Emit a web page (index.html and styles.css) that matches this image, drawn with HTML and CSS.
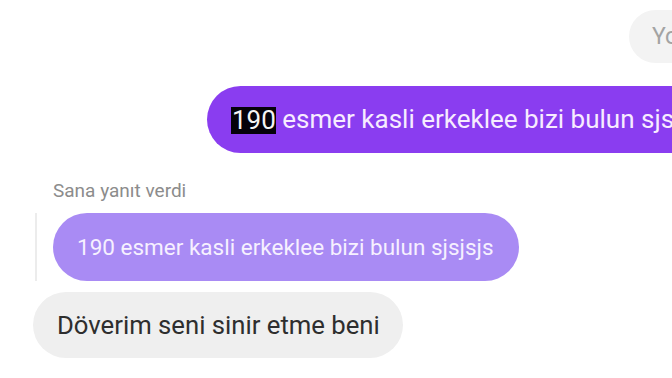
FILE: index.html
```html
<!DOCTYPE html>
<html>
<head>
<meta charset="utf-8">
<link rel="stylesheet" href="styles.css">
</head>
<body>
<div class="chat">
  <div class="row row-top">
    <div class="bubble bubble-faint">You replied</div>
  </div>
  <div class="row row-sent">
    <div class="bubble bubble-sent"><span class="hl">190</span> esmer kasli erkeklee bizi bulun sjsjsjs</div>
  </div>
  <div class="reply-label">Sana yanıt verdi</div>
  <div class="row row-quote">
    <div class="quote-line"></div>
    <div class="bubble bubble-quote">190 esmer kasli erkeklee bizi bulun sjsjsjs</div>
  </div>
  <div class="row row-recv">
    <div class="bubble bubble-recv">Döverim seni sinir etme beni</div>
  </div>
</div>
</body>
</html>
```

FILE: styles.css
```css
html, body {
  margin: 0;
  padding: 0;
  background: #ffffff;
  overflow: hidden;
  width: 672px;
  height: 378px;
}
.chat {
  display: flex;
  flex-direction: column;
  font-family: Roboto, "Noto Sans", sans-serif;
  width: 672px;
}
.row {
  display: flex;
  align-items: stretch;
  white-space: nowrap;
}
.bubble {
  display: block;
  flex-shrink: 0;
  white-space: nowrap;
}
.row-top {
  margin-top: 10px;
  padding-left: 629px;
}
.bubble-faint {
  height: 53px;
  line-height: 53px;
  padding: 0 24px 0 23px;
  border-radius: 27px;
  background: #f3f3f3;
  color: #a3a3a3;
  font-size: 23px;
}
.row-sent {
  margin-top: 23px;
  padding-left: 207px;
}
.bubble-sent {
  height: 67px;
  line-height: 67px;
  padding: 0 26px 0 24px;
  border-radius: 34px;
  background: #8a3df0;
  color: #f7ecff;
  font-size: 26px;
}
.hl {
  display: inline-block;
  background: #05020a;
  color: #f4f4f4;
  padding: 0 0 0 1px;
  height: 27px;
  line-height: 27px;
  vertical-align: middle;
  position: relative;
  top: -1px;
}
.reply-label {
  margin-top: 26px;
  padding-left: 53px;
  font-size: 19px;
  line-height: 24px;
  color: #8c8c8c;
}
.row-quote {
  margin-top: 10px;
  padding-left: 35px;
}
.quote-line {
  width: 2px;
  background: #ececec;
  margin-right: 16px;
}
.bubble-quote {
  height: 68px;
  line-height: 68px;
  padding: 0 25px 0 24px;
  border-radius: 34px;
  background: #a98bf4;
  color: #f6f0ff;
  font-size: 22.5px;
}
.row-recv {
  margin-top: 11px;
  padding-left: 33px;
}
.bubble-recv {
  height: 66px;
  line-height: 66px;
  padding: 0 23px 0 24px;
  border-radius: 33px;
  background: #efefef;
  color: #2e2e2e;
  font-size: 25.7px;
}
```
